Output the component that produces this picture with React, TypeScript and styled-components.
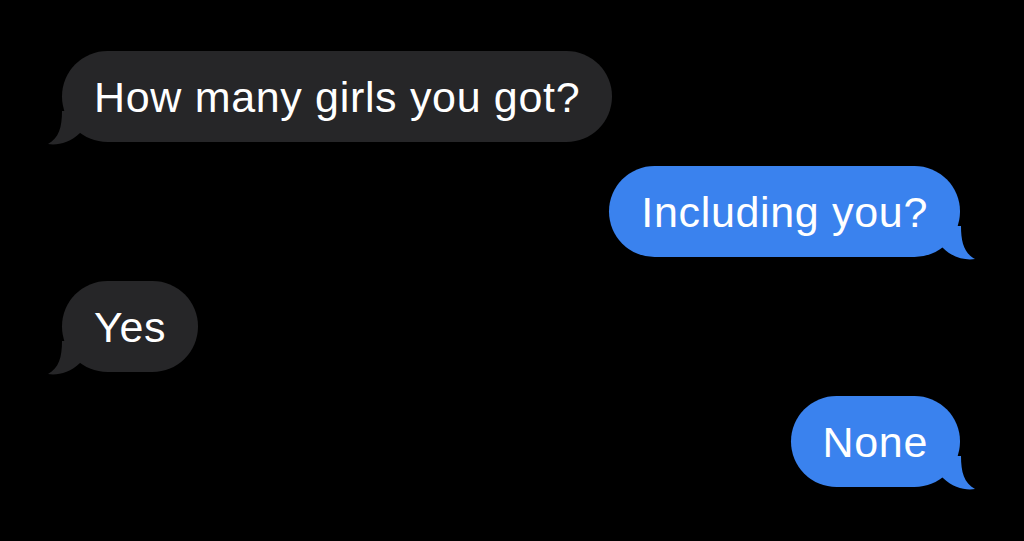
import React from "react";
import styled, { createGlobalStyle } from "styled-components";

const Global = createGlobalStyle`
  html, body { margin: 0; padding: 0; background: #000; }
  body { width: 1024px; height: 541px; overflow: hidden; }
`;

const Thread = styled.div`
  display: flex;
  flex-direction: column;
  gap: 24px;
  padding: 51px 64px 0 62px;
  height: 541px;
  box-sizing: border-box;
  background: #000;
  font-family: "Liberation Sans", Arial, sans-serif;
`;

const Bubble = styled.div<{ $mine?: boolean }>`
  position: relative;
  align-self: ${(p) => (p.$mine ? "flex-end" : "flex-start")};
  background: ${(p) => (p.$mine ? "#3a82ee" : "#262628")};
  color: #fff;
  font-size: 43px;
  letter-spacing: 0.67px;
  line-height: 47px;
  padding: 23px 32px 21px;
  border-radius: 46px;
  white-space: nowrap;
`;

const Tail = styled.svg<{ $mine?: boolean }>`
  position: absolute;
  bottom: -3px;
  width: 36px;
  height: 34px;
  ${(p) => (p.$mine ? "right: -15px; transform: scaleX(-1);" : "left: -14px;")}
`;

function BubbleTail({ mine, color }: { mine?: boolean; color: string }) {
  return (
    <Tail $mine={mine} viewBox="0 0 36 34">
      <path
        d="M14 0 C14 16 11 27 0 33 C9 34.5 22 32 32 22 L36 18 L36 0 Z"
        fill={color}
      />
    </Tail>
  );
}

const messages = [
  { text: "How many girls you got?", mine: false },
  { text: "Including you?", mine: true },
  { text: "Yes", mine: false },
  { text: "None", mine: true },
];

export default function App() {
  return (
    <>
      <Global />
      <Thread>
        {messages.map((m, i) => (
          <Bubble key={i} $mine={m.mine}>
            {m.text}
            <BubbleTail mine={m.mine} color={m.mine ? "#3a82ee" : "#262628"} />
          </Bubble>
        ))}
      </Thread>
    </>
  );
}
